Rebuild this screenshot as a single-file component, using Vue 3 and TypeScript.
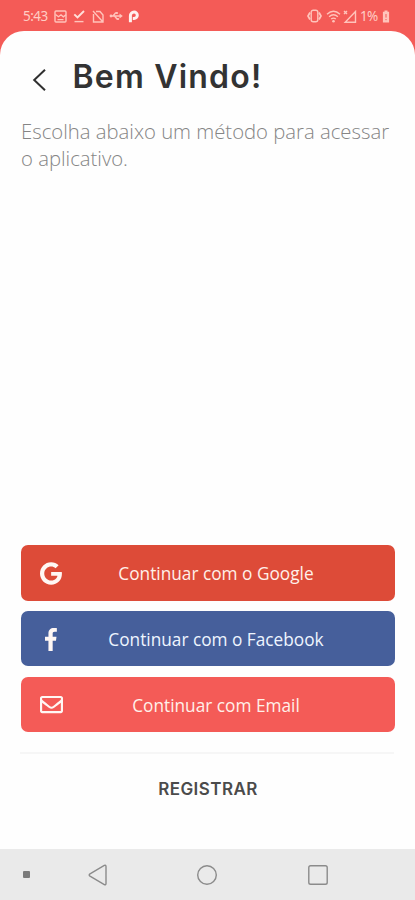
<script setup lang="ts">
interface Method {
  id: 'google' | 'facebook' | 'email'
  label: string
  viewBox: string
  path: string
}

const methods: Method[] = [
  {
    id: 'google',
    label: 'Continuar com o Google',
    viewBox: '0 0 488 512',
    path: 'M488 261.8C488 403.3 391.1 504 248 504 110.8 504 0 393.2 0 256S110.8 8 248 8c66.8 0 123 24.5 166.3 64.9l-67.5 64.9C258.5 52.6 94.3 116.6 94.3 256c0 86.5 69.1 156.6 153.7 156.6 98.2 0 135-70.4 140.8-106.9H248v-85.3h236.1c2.3 12.7 3.9 24.9 3.9 41.4z',
  },
  {
    id: 'facebook',
    label: 'Continuar com o Facebook',
    viewBox: '0 0 264 512',
    path: 'M76.7 512V283H0v-91h76.7v-71.7C76.7 42.4 124.3 0 193.8 0c33.3 0 61.9 2.5 70.2 3.6V85h-48.2c-37.8 0-45.1 18-45.1 44.3V192H256l-11.7 91h-73.6v229',
  },
  {
    id: 'email',
    label: 'Continuar com Email',
    viewBox: '0 0 512 512',
    path: 'M464 64H48C21.49 64 0 85.49 0 112v288c0 26.51 21.49 48 48 48h416c26.51 0 48-21.49 48-48V112c0-26.51-21.49-48-48-48zm0 48v40.805c-22.422 18.259-58.168 46.651-134.587 106.49-16.841 13.247-50.201 45.072-73.413 44.701-23.208.375-56.579-31.459-73.413-44.701C106.18 199.465 70.425 171.067 48 152.805V112h416zM48 400V214.398c22.914 18.251 55.409 43.862 104.938 82.646 21.857 17.205 60.134 55.186 103.062 54.955 42.717.231 80.509-37.199 103.053-54.947 49.528-38.783 82.032-64.401 104.947-82.653V400H48z',
  },
]
</script>

<template>
  <div class="screen">
    <header class="status">
      <div class="status-left">
        <span class="clock">5:43</span>
        <svg class="image" width="13" height="13" viewBox="0 0 13 13">
          <rect x="1" y="1" width="11" height="11" rx="1" />
          <path d="M1.5 4.5l3 2.2L7 4.8l2.3 2 2.7-2M3.5 9.6h6" />
        </svg>
        <svg class="check" width="12" height="14" viewBox="0 0 12 14">
          <path d="M1.3 5.3l3.2 3.2L11 2" class="tick" />
          <path d="M1.5 12.6h9" />
        </svg>
        <svg class="card" width="12" height="13" viewBox="0 0 12 13">
          <path d="M4 1.5h4L11 5v7H1.5V4M1 1l10 11" />
        </svg>
        <svg class="usb" width="14" height="10" viewBox="0 0 14 10">
          <path d="M1 5h11M4 5l2.5-3H8M5.5 5L8 8h1.5" />
          <circle cx="2" cy="5" r="1.4" class="solid" />
          <path d="M10.5 2.5L13.8 5l-3.3 2.5z" class="solid" />
          <circle cx="8" cy="2" r="1.1" class="solid" />
          <circle cx="9" cy="8" r="1.1" class="solid" />
        </svg>
        <svg class="badge" width="12" height="13" viewBox="0 0 12 13">
          <path d="M2.4 12.2V5.8A3.7 3.4 0 0 1 6.1 2.1a3.1 3.1 0 0 1 0 6.4H4.8" />
        </svg>
      </div>
      <div class="status-right">
        <svg class="vibrate" width="15" height="14" viewBox="0 0 15 14">
          <rect x="4.2" y="1.2" width="6.6" height="11.6" rx="2" />
          <path d="M3 3.5L1 7l2 3.5M12 3.5L14 7l-2 3.5" class="waves" />
        </svg>
        <svg class="wifi" width="15" height="13" viewBox="0 0 15 13">
          <path d="M1 4.2Q7.5-1.8 14 4.2M3.1 6.7q4.4-3.8 8.8 0M5.2 9q2.3-1.8 4.6 0" />
          <circle cx="7.5" cy="11.2" r="1.3" class="solid" />
        </svg>
        <svg class="signal" width="14" height="13" viewBox="0 0 14 13">
          <path d="M12.5 1.5v10.7H2.2zM1 1l3 3M4 1L1 4" />
        </svg>
        <span class="charge">1%</span>
        <svg class="battery" width="8" height="13" viewBox="0 0 8 13">
          <path d="M2.5 .5h3v1.3h1.6v10.7H.9V1.8h1.6z" />
          <path d="M4 4v3.6M4 9v1.2" class="level" />
        </svg>
      </div>
    </header>

    <main class="sheet">
      <div class="heading">
        <button class="back" type="button" aria-label="Voltar">
          <svg width="15" height="24" viewBox="0 0 15 24">
            <path d="M13 1.7L2.2 12 13 22.3" />
          </svg>
        </button>
        <h1>Bem Vindo!</h1>
      </div>
      <p class="intro">Escolha abaixo um método para acessar<br />o aplicativo.</p>

      <div class="methods">
        <button v-for="m in methods" :key="m.id" type="button" class="method" :class="m.id">
          <span class="icon"><svg :viewBox="m.viewBox"><path :d="m.path" /></svg></span>
          <span class="label">{{ m.label }}</span>
        </button>
      </div>
      <div class="divider"></div>
      <button class="register" type="button">REGISTRAR</button>
    </main>

    <nav class="navbar">
      <span class="dot"></span>
      <svg class="nav-back" width="20" height="22" viewBox="0 0 20 22">
        <path d="M2 9.9L16.3 1.4q1.7-.7 1.7 1.1v17q0 1.8-1.7 1.1L2 12.1q-1.6-1.1 0-2.2z" />
      </svg>
      <svg class="nav-home" width="22" height="22" viewBox="0 0 22 22">
        <circle cx="11" cy="11" r="9.3" />
      </svg>
      <svg class="nav-recent" width="22" height="22" viewBox="0 0 22 22">
        <rect x="1.8" y="1.8" width="18.4" height="18.4" rx="1.8" />
      </svg>
    </nav>
  </div>
</template>

<style>
body {
  margin: 0;
}
</style>

<style scoped>
.screen {
  width: 415px;
  height: 900px;
  display: flex;
  flex-direction: column;
  overflow: hidden;
  background: #f45b57;
  font-family: "Open Sans", sans-serif;
}
button {
  border: 0;
  padding: 0;
  background: none;
  font: inherit;
}
svg {
  display: block;
  flex: none;
  fill: none;
}
.status {
  height: 31.4px;
  flex: none;
  box-sizing: border-box;
  padding: 1px 25px 0 23px;
  display: flex;
  justify-content: space-between;
  color: #ffcdc4;
  font-family: "Noto Sans", sans-serif;
  font-size: 13.5px;
}
.status svg {
  stroke: #ffc4bb;
  stroke-width: 1.4;
}
.status .solid {
  fill: #ffc4bb;
  stroke: none;
}
.status-left,
.status-right {
  display: flex;
  align-items: center;
}
.clock {
  width: 31px;
  letter-spacing: -0.5px;
}
.check {
  margin-left: 6px;
}
.tick {
  stroke: #ffe0da;
  stroke-width: 1.9;
}
.card {
  margin-left: 7px;
}
.usb {
  margin-left: 5px;
}
.badge {
  margin-left: 5px;
}
.status .badge {
  stroke: #fff0ed;
  stroke-width: 3;
}
.waves {
  stroke-width: 1.8;
}
.wifi {
  margin-left: 4px;
}
.signal {
  margin-left: 2px;
}
.charge {
  width: 18px;
  margin: 0 4px 0 3px;
  letter-spacing: -0.6px;
}
.status .battery {
  fill: #ffc4bb;
  stroke: none;
}
.status .level {
  stroke: #f45b57;
  stroke-width: 1;
}
.sheet {
  height: 818px;
  flex: none;
  box-sizing: border-box;
  padding: 0 20px 0 21px;
  border-radius: 24px 24px 0 0;
  background: #fefefe;
  display: flex;
  flex-direction: column;
}
.heading {
  display: flex;
  align-items: center;
  height: 50px;
  padding: 23.5px 0 0 11px;
}
.back svg {
  stroke: #303030;
  stroke-width: 2;
}
.heading h1 {
  margin: -5px 0 0 25.5px;
  color: #333;
  font: 600 32px/40px Inter, sans-serif;
  letter-spacing: 1.2px;
  white-space: nowrap;
}
.intro {
  margin: 12.8px 0 0;
  color: #858585;
  font-size: 20.3px;
  font-weight: 300;
  line-height: 27px;
  white-space: nowrap;
}
.methods {
  margin-top: auto;
  display: grid;
  grid-template-rows: 56px 55px 55px;
  row-gap: 10.5px;
}
.method {
  display: grid;
  grid-template-columns: 60px 1fr 44px;
  align-items: center;
  border-radius: 7px;
  color: #fff0e9;
  font-size: 17.25px;
  white-space: nowrap;
}
.google {
  background: #dd4b38;
}
.facebook {
  background: #465f9b;
  color: #eef5ff;
}
.email {
  background: #f45b57;
}
.icon svg {
  height: 23px;
  margin: 1px auto 0;
  fill: #fff7f4;
}
.label {
  padding-top: 1px;
  text-align: center;
}
.email .label {
  padding-top: 2px;
}
.divider {
  height: 2px;
  margin: 20px 1px 0 -1px;
  background: #f6f6f6;
}
.register {
  height: 70px;
  margin-bottom: 25.5px;
  color: #4b4b4b;
  font: 600 17px/24px Inter, sans-serif;
  letter-spacing: 0.45px;
}
.navbar {
  flex: 1;
  display: flex;
  align-items: center;
  padding-left: 23px;
  background: #eaeaea;
}
.navbar svg {
  stroke: #8b8b8b;
  stroke-width: 1.4;
}
.dot {
  width: 7px;
  height: 7px;
  border-radius: 1px;
  background: #7b7b7b;
}
.nav-back {
  margin-left: 58px;
}
.nav-home {
  margin-left: 88.4px;
}
.nav-recent {
  margin-left: 88.6px;
}
</style>
